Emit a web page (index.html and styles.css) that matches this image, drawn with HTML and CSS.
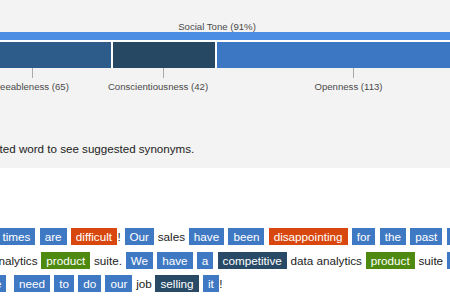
FILE: index.html
```html
<!DOCTYPE html>
<html lang="en">
<head>
<meta charset="utf-8">
<title>Tone Analyzer</title>
<link rel="stylesheet" href="styles.css">
</head>
<body>
<section class="summary">
  <div class="total-label">Social Tone (91%)</div>
  <div class="total-bar"></div>
  <div class="traits">
    <div class="trait trait-agree">
      <div class="trait-bar"></div>
      <div class="tick"></div>
      <div class="trait-label">Agreeableness (65)</div>
    </div>
    <div class="trait trait-consc">
      <div class="trait-bar"></div>
      <div class="tick"></div>
      <div class="trait-label">Conscientiousness (42)</div>
    </div>
    <div class="trait trait-open">
      <div class="trait-bar"></div>
      <div class="tick"></div>
      <div class="trait-label">Openness (113)</div>
    </div>
  </div>
  <p class="hint">Click on a highlighted word to see suggested synonyms.</p>
</section>
<section class="text">
  <div class="line line-1"><span class="tag t-open">times</span> <span class="tag t-open">are</span> <span class="tag t-anger">difficult</span>! <span class="tag t-open">Our</span> sales <span class="tag t-open">have</span> <span class="tag t-open">been</span> <span class="tag t-anger">disappointing</span> <span class="tag t-open">for</span> <span class="tag t-open">the</span> <span class="tag t-open">past</span> <span class="tag t-open">three</span></div>
  <div class="line line-2">analytics <span class="tag t-agree">product</span> suite. <span class="tag t-open">We</span> <span class="tag t-open">have</span> <span class="tag t-open">a</span> <span class="tag t-consc">competitive</span> data analytics <span class="tag t-agree">product</span> suite <span class="tag t-open">in</span></div>
  <div class="line line-3"><span class="tag t-open">we</span>&nbsp; <span class="tag t-open">need</span> <span class="tag t-open">to</span> <span class="tag t-open">do</span> <span class="tag t-open">our</span> job <span class="tag t-consc">selling</span> <span class="tag t-open">it</span>!</div>
</section>
</body>
</html>
```

FILE: styles.css
```css
html, body {
  margin: 0;
  padding: 0;
}

body {
  width: 450px;
  height: 300px;
  overflow: hidden;
  background: #ffffff;
  font-family: "Liberation Sans", Arial, Helvetica, sans-serif;
  color: #222222;
}

.summary {
  box-sizing: border-box;
  height: 168px;
  padding-top: 22px;
  background: #f3f3f3;
  overflow: hidden;
}

.total-label {
  width: 434px;
  text-align: center;
  font-size: 9.6px;
  line-height: 10px;
  color: #4a4a4a;
}

.total-bar {
  height: 8px;
  background: #4a8de2;
  border-bottom: 2px solid #ffffff;
}

.traits {
  display: flex;
  margin-left: -47px;
}

.trait {
  flex: none;
  display: flex;
  flex-direction: column;
  align-items: center;
}

.trait-bar {
  box-sizing: border-box;
  align-self: stretch;
  height: 26px;
}

.trait + .trait .trait-bar {
  border-left: 2px solid #ffffff;
}

.trait-agree { width: 158px; }
.trait-consc { width: 104px; }
.trait-open { width: 277px; }

.trait-agree .trait-bar { background: #2e5c8a; }
.trait-consc .trait-bar { background: #264863; }
.trait-open .trait-bar { background: #3c77c3; }

.tick {
  width: 1px;
  height: 10px;
  background: #a9a9a9;
}

.trait-label {
  margin: 3px 10px 0 0;
  font-size: 9.6px;
  line-height: 12px;
  color: #4a4a4a;
  white-space: nowrap;
}

.hint {
  margin: 49px 0 0 -94.5px;
  font-size: 11.6px;
  line-height: 14px;
  color: #222222;
  white-space: nowrap;
}

.text {
  padding-top: 57px;
  font-size: 11.7px;
  color: #222222;
}

.line {
  height: 23.5px;
  line-height: 23.5px;
  white-space: nowrap;
}

.line-1 { margin-left: -3px; }
.line-2 { margin-left: -8px; }
.line-3 { margin-left: -19px; }

.tag {
  display: inline-block;
  margin: 0 0.5px;
  padding: 1px 5px;
  line-height: 15px;
  color: #ffffff;
}

.t-open { background: #3f79c4; }
.t-anger { background: #d8480e; }
.t-agree { background: #4e8a10; }
.t-consc { background: #284a66; }
```
